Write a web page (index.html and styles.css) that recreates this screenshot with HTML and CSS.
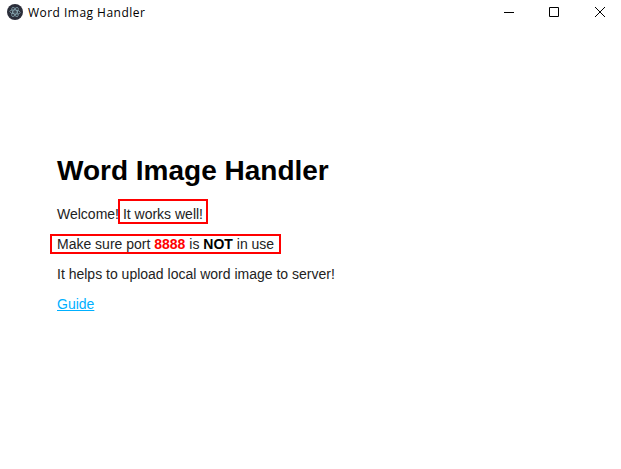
FILE: index.html
```html
<!DOCTYPE html>
<html lang="en">
<head>
<meta charset="utf-8">
<title>Word Imag Handler</title>
<link rel="stylesheet" href="styles.css">
</head>
<body>
<header class="titlebar">
  <svg class="app-icon" viewBox="0 0 16 16" width="16" height="16">
    <circle cx="8" cy="8" r="8" fill="#2b2e3a"/>
    <g fill="none" stroke="#96bac4" stroke-width=".65">
      <ellipse cx="8" cy="8" rx="5.200" ry="2" transform="rotate(5 8 8)"/>
      <ellipse cx="8" cy="8" rx="5.200" ry="2" transform="rotate(62 8 8)"/>
      <ellipse cx="8" cy="8" rx="5.200" ry="2" transform="rotate(120 8 8)"/>
    </g>
    <circle cx="8" cy="8" r=".6" fill="#96bac4"/>
  </svg>
  <span class="window-title">Word Imag Handler</span>
  <div class="controls">
    <svg viewBox="0 0 46 26" width="46" height="26"><path d="M18 12.500h10"/></svg>
    <svg viewBox="0 0 46 26" width="46" height="26"><path d="M17.500 7.500h9v9h-9z"/></svg>
    <svg viewBox="0 0 46 26" width="46" height="26"><path d="M17 7l10 10M27 7l-10 10"/></svg>
  </div>
</header>
<main class="content">
  <h1>Word Image Handler</h1>
  <p>Welcome! <span class="marked works">It works well!</span></p>
  <p><span class="marked port-note">Make sure port <strong class="port">8888</strong> is <strong class="not">NOT</strong> in use</span></p>
  <p>It helps to upload local word image to server!</p>
  <p><a href="#">Guide</a></p>
</main>
</body>
</html>
```

FILE: styles.css
```css
body {
  margin: 0;
  height: 469px;
  overflow: hidden;
  background: #fff;
  color: #000;
  font-family: "Liberation Sans", Arial, sans-serif;
  font-size: 14px;
}
.titlebar {
  display: flex;
  height: 26px;
  align-items: center;
}
.app-icon {
  margin-left: 7px;
  margin-bottom: 2px;
}
.window-title {
  margin-left: 5px;
  margin-bottom: 1px;
  font: 12px "Open Sans", sans-serif;
  letter-spacing: .47px;
}
.controls {
  display: flex;
  margin-left: auto;
  margin-right: -3px;
}
.controls svg {
  fill: none;
  stroke: #000;
}
.content { padding: 128px 57px 0; }
h1 {
  margin: 0 0 11px;
  font-size: 28px;
  line-height: 34px;
}
p {
  margin: 0;
  color: #222;
  line-height: 30px;
}
.marked { outline: 2px solid #f00; }
.works {
  margin: 0 -3px;
  padding: 5px 3px 0;
}
.port-note {
  margin: 0 -5px;
  padding: 0 5px;
}
.port { color: #f00; }
.not { color: #000; }
a { color: #00b0ff; }
```
